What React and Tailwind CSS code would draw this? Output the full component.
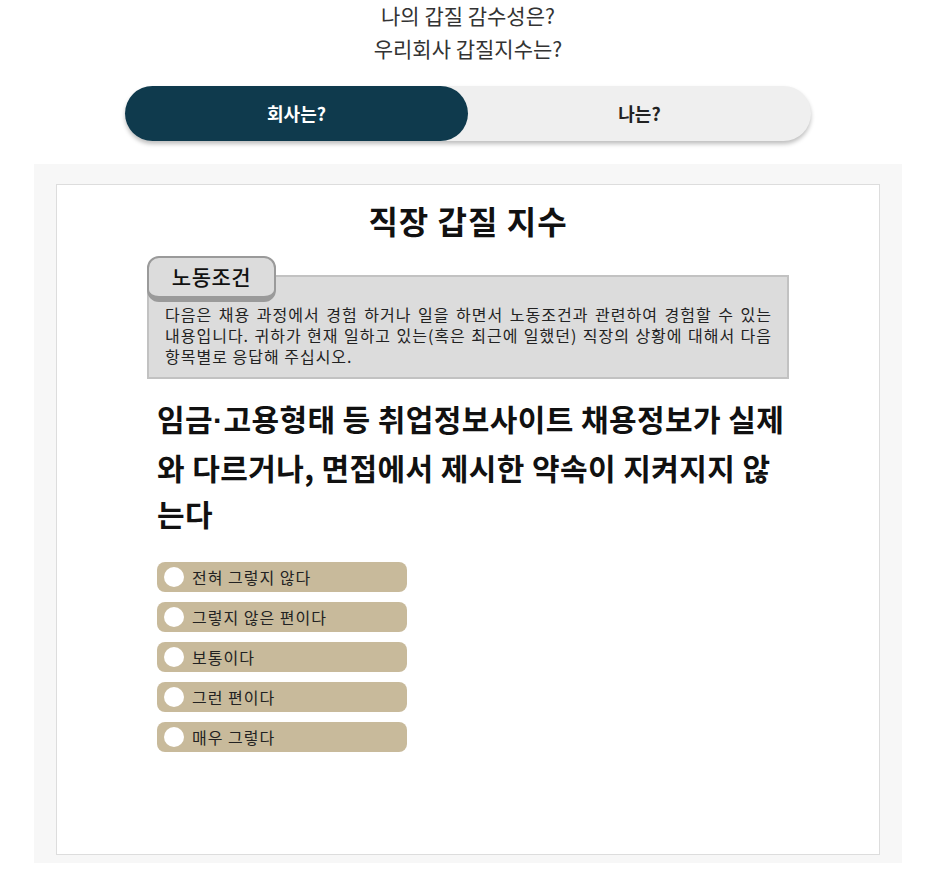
import { useState } from "react";

/* ── 직장 갑질 지수 설문 ─────────────────────────────────────────── */
const OPTIONS = ["전혀 그렇지 않다", "그렇지 않은 편이다", "보통이다", "그런 편이다", "매우 그렇다"];

export default function App() {
  const [tab, setTab] = useState("company");
  const [answer, setAnswer] = useState(null);

  return (
    <div className="min-h-[890px] bg-white text-[#222] font-['Noto_Sans_CJK_KR','Noto_Sans',sans-serif]">
      <div className="pl-[6px]">
        <div className="text-center text-[21px] leading-[33px] text-[#333]">
          <p className="-mt-[1px]">나의 갑질 감수성은?</p>
          <p>우리회사 갑질지수는?</p>
        </div>

        <div className="mx-auto mt-[21px] w-[686px] h-[55px] flex rounded-full bg-[#efefef] shadow-[0_3px_4px_rgba(0,0,0,0.25)]">
          <button onClick={() => setTab("company")}
            className={"w-[343px] h-full rounded-full text-[18px] font-bold " + (tab === "company" ? "bg-[#0f3a4d] text-white" : "text-[#222]")}>
            회사는?
          </button>
          <button onClick={() => setTab("me")}
            className={"flex-1 h-full rounded-full text-[18px] font-bold " + (tab === "me" ? "bg-[#0f3a4d] text-white" : "text-[#222]")}>
            나는?
          </button>
        </div>

        <div className="mx-auto mt-[23px] w-[868px] bg-[#f7f7f7] pt-[20px] pb-[8px] px-[22px]">
          <div className="bg-white border border-[#dddddd] h-[671px] px-[90px]">
            <h1 className="text-center text-[32px] font-bold leading-[40px] pt-[15px] tracking-[1px] text-[#111]">직장 갑질 지수</h1>

            <div className="mt-[16px]">
              <div className="relative z-10 w-[129px] h-[46px] rounded-[12px] bg-[#dcdcdc] border-2 border-b-[6px] border-[#9a9a9a] flex items-center justify-center text-[21px] font-medium tracking-[0.5px] text-[#111]">
                노동조건
              </div>
              <div className="-mt-[27px] bg-[#dcdcdc] border-2 border-[#c2c2c2] pt-[27px] pb-[10px] pl-[16px] pr-[15px] text-[16px] tracking-[1px] leading-[21px] text-[#222] text-justify break-keep">
                다음은 채용 과정에서 경험 하거나 일을 하면서 노동조건과 관련하여 경험할 수 있는 내용입니다. 귀하가 현재 일하고 있는(혹은 최근에 일했던) 직장의 상황에 대해서 다음 항목별로 응답해 주십시오.
              </div>
            </div>

            <h2 className="mt-[16px] pl-[10px] text-[30px] font-bold leading-[46px] tracking-[0.4px] break-all text-[#111]">
              임금<span className="font-['Liberation_Sans',sans-serif]">·</span>고용형태 등 취업정보사이트 채용정보가 실제와 다르거나, 면접에서 제시한 약속이 지켜지지 않는다
            </h2>

            <div className="mt-[26px] pl-[10px] flex flex-col gap-[10px]">
              {OPTIONS.map((o, i) => (
                <label key={o} onClick={() => setAnswer(i)}
                  className="w-[250px] h-[30px] rounded-[8px] bg-[#c8ba9b] flex items-center pl-[7px] cursor-pointer">
                  <span className={"w-[20px] h-[20px] rounded-full bg-white shrink-0 " + (answer === i ? "border-[6px] border-[#0f3a4d]" : "")} />
                  <span className="ml-[8px] text-[16px] tracking-[1px] text-[#222]">{o}</span>
                </label>
              ))}
            </div>
          </div>
        </div>
      </div>
    </div>
  );
}
